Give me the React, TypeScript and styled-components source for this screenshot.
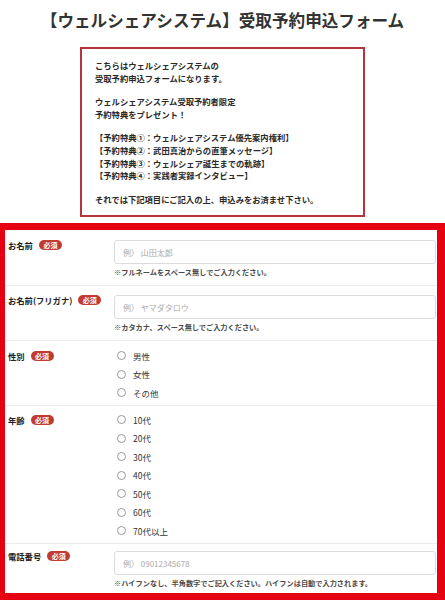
import React from "react";
import styled, { createGlobalStyle } from "styled-components";

const GlobalStyle = createGlobalStyle`
  body {
    margin: 0;
    background: #fff;
    font-family: "Noto Sans CJK JP", "Noto Sans", sans-serif;
    color: #222;
  }
`;

const genders = ["男性", "女性", "その他"];
const ages = ["10代", "20代", "30代", "40代", "50代", "60代", "70代以上"];

const App: React.FC = () => {
  return (
    <>
      <GlobalStyle />
      <Page>
        <Title>【ウェルシェアシステム】受取予約申込フォーム</Title>

        <Notice>
          <p>
            こちらはウェルシェアシステムの
            <br />
            受取予約申込フォームになります。
          </p>
          <p>
            ウェルシェアシステム受取予約者限定
            <br />
            予約特典をプレゼント！
          </p>
          <p>
            【予約特典①：ウェルシェアシステム優先案内権利】
            <br />
            【予約特典②：武田真治からの直筆メッセージ】
            <br />
            【予約特典③：ウェルシェア誕生までの軌跡】
            <br />
            【予約特典④：実践者実録インタビュー】
          </p>
          <p>それでは下記項目にご記入の上、申込みをお済ませ下さい。</p>
        </Notice>

        <Form>
          <Row $pad="10px 0 8px">
            <LabelCell $lh={10}>
              <LabelText>お名前</LabelText>
              <Badge>必須</Badge>
            </LabelCell>
            <Field>
              <TextInput placeholder="例） 山田太郎" />
              <Note>※フルネームをスペース無しでご入力ください。</Note>
            </Field>
          </Row>

          <Row $pad="9px 0 8px">
            <LabelCell $lh={10}>
              <LabelText>お名前(フリガナ)</LabelText>
              <Badge>必須</Badge>
            </LabelCell>
            <Field>
              <TextInput placeholder="例） ヤマダタロウ" />
              <Note>※カタカナ、スペース無しでご入力ください。</Note>
            </Field>
          </Row>

          <Row $pad="5px 0 3.5px">
            <LabelCell $lh={18.5}>
              <LabelText>性別</LabelText>
              <Badge>必須</Badge>
            </LabelCell>
            <Field>
              {genders.map((g) => (
                <RadioItem key={g}>
                  <Radio type="radio" name="gender" />
                  {g}
                </RadioItem>
              ))}
            </Field>
          </Row>

          <Row $pad="4px 0 3.5px">
            <LabelCell $lh={18.5}>
              <LabelText>年齢</LabelText>
              <Badge>必須</Badge>
            </LabelCell>
            <Field>
              {ages.map((a) => (
                <RadioItem key={a}>
                  <Radio type="radio" name="age" />
                  {a}
                </RadioItem>
              ))}
            </Field>
          </Row>

          <Row $pad="7px 0 5px">
            <LabelCell $lh={10}>
              <LabelText>電話番号</LabelText>
              <Badge>必須</Badge>
            </LabelCell>
            <Field>
              <TextInput placeholder="例） 09012345678" />
              <Note>※ハイフンなし、半角数字でご記入ください。ハイフンは自動で入力されます。</Note>
            </Field>
          </Row>
        </Form>
      </Page>
    </>
  );
};

export default App;

const Page = styled.div`
  padding-top: 8px;
`;

const Title = styled.h1`
  margin: 0;
  font-size: 16.6px;
  line-height: 24px;
  font-weight: 700;
  text-align: center;
  color: #333;
  white-space: nowrap;
`;

const Notice = styled.div`
  box-sizing: border-box;
  width: 285px;
  margin: 15px auto 0;
  padding: 10px 12px 10px 13px;
  border: 2px solid #b7333d;
  font-size: 8.3px;
  line-height: 12.6px;
  font-weight: 700;
  color: #2a2a2a;
  white-space: nowrap;

  p {
    margin: 0 0 11px;
  }
  p:last-child {
    margin-bottom: 0;
  }
`;

const Form = styled.div`
  margin-top: 6px;
  border-style: solid;
  border-color: #e50012;
  border-width: 7px 8px 9px 5px;
  background: #fff;
`;

const Row = styled.div<{ $pad: string }>`
  display: grid;
  grid-template-columns: 106px 1fr;
  padding: ${(p) => p.$pad};
  padding-left: 3px;
  padding-right: 1px;
  border-top: 1px solid #ececec;

  &:first-child {
    border-top: none;
  }
`;

const LabelCell = styled.div<{ $lh: number }>`
  display: flex;
  align-items: center;
  height: ${(p) => p.$lh}px;
`;

const LabelText = styled.span`
  font-size: 8.3px;
  font-weight: 700;
  color: #222;
  white-space: nowrap;
`;

const Badge = styled.span`
  margin-left: 6px;
  padding: 0 4.5px;
  height: 10px;
  line-height: 10px;
  border-radius: 5px;
  background: #c23a32;
  color: #fff;
  font-size: 7px;
  font-weight: 700;
  white-space: nowrap;
`;

const Field = styled.div`
  display: flex;
  flex-direction: column;
`;

const TextInput = styled.input`
  box-sizing: border-box;
  width: 100%;
  height: 24px;
  margin: 0;
  padding: 0 8px;
  border: 1px solid #dcdcdc;
  border-radius: 3px;
  font-family: inherit;
  font-size: 8px;
  color: #333;
  outline: none;

  &::placeholder {
    color: #aaa;
  }
`;

const Note = styled.div`
  margin-top: 3px;
  font-size: 7.2px;
  line-height: 10px;
  font-weight: 700;
  color: #4a4a4a;
  white-space: nowrap;
`;

const RadioItem = styled.label`
  display: flex;
  align-items: center;
  height: 18.5px;
  font-size: 8.5px;
  color: #333;
`;

const Radio = styled.input`
  appearance: none;
  box-sizing: border-box;
  width: 9px;
  height: 9px;
  margin: 0 7px 0 3px;
  border: 1px solid #999;
  border-radius: 50%;
  background: #fff;
`;
